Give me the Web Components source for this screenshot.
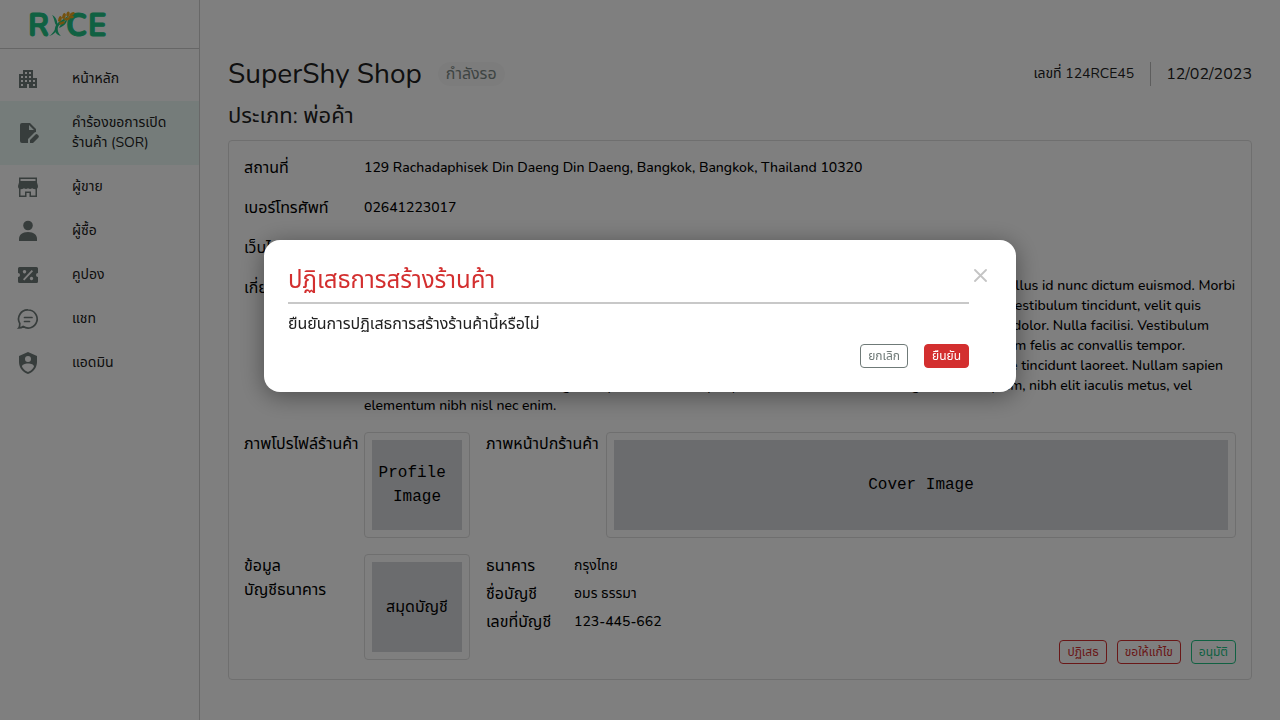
<!DOCTYPE html>
<html lang="th">
<head>
<meta charset="utf-8">
<meta name="viewport" content="width=device-width, initial-scale=1">
<title>RYCE – คำร้องขอการเปิดร้านค้า</title>
<style>
  body {
    margin: 0;
    background: #fff;
    color: #212121;
    font: 400 14px/20px Nunito, "Noto Sans Thai", "Open Sans", sans-serif;
    --line: #dedede;
    --muted: #6f7a78;
    --red: #d32f2f;
    --green: #20c284;
  }
</style>
</head>
<body>
<app-shell>
  <app-sidebar slot="side">
    <nav-item icon="building">หน้าหลัก</nav-item>
    <nav-item icon="document" active>คำร้องขอการเปิดร้านค้า (SOR)</nav-item>
    <nav-item icon="store">ผู้ขาย</nav-item>
    <nav-item icon="person">ผู้ซื้อ</nav-item>
    <nav-item icon="coupon">คูปอง</nav-item>
    <nav-item icon="chat">แชท</nav-item>
    <nav-item icon="shield">แอดมิน</nav-item>
  </app-sidebar>

  <shop-header>
    <span slot="name">SuperShy Shop</span>
    <span slot="status">กำลังรอ</span>
    <span slot="number">เลขที่ 124RCE45</span>
    <span slot="date">12/02/2023</span>
    <span slot="type">ประเภท: พ่อค้า</span>
  </shop-header>

  <detail-card>
    <detail-row label="สถานที่">129 Rachadaphisek Din Daeng Din Daeng, Bangkok, Bangkok, Thailand 10320</detail-row>
    <detail-row label="เบอร์โทรศัพท์">02641223017</detail-row>
    <detail-row label="เว็บไซต์">www.supershy.com</detail-row>
    <detail-row label="เกี่ยวกับร้าน">Lorem ipsum dolor sit amet, consectetur adipiscing elit. eget viverra tortor ligula egestas integer. Phasellus id nunc dictum euismod. Morbi egestas tempus sit risus dictumst ligula viverra ornare cursus sit platea ornare habitasse ornare nunc. Vestibulum tincidunt, velit quis tempus vitae ligula blandit lectus semper cursus ligula massa egestas lectus semper habitasse feugiat dolor. Nulla facilisi. Vestibulum egestas feugiat porta quam platea sed hac semper semper sed habitasse at eget non donec porta dictum felis ac convallis tempor. habitasse quam ornare semper risus tortor nunc lectus quam integer blandit viverra habitasse sit ornare tincidunt laoreet. Nullam sapien habitasse blandit hac sit vitae egestas porta amet semper pulvinar vitae blandit sit integer amet aliquam, nibh elit iaculis metus, vel elementum nibh nisl nec enim.</detail-row>
    <image-pair>
      <span slot="label-a">ภาพโปรไฟล์ร้านค้า</span>
      <image-frame slot="a" mono>Profile 
Image</image-frame>
      <span slot="label-b">ภาพหน้าปกร้านค้า</span>
      <image-frame slot="b" mono>Cover Image</image-frame>
    </image-pair>
    <bank-section>
      <image-frame slot="book">สมุดบัญชี</image-frame>
      <action-button slot="actions" tone="red">ปฏิเสธ</action-button>
      <action-button slot="actions" tone="red">ขอให้แก้ไข</action-button>
      <action-button slot="actions" tone="green">อนุมัติ</action-button>
    </bank-section>
  </detail-card>
</app-shell>

<confirm-dialog>
  <span slot="title">ปฏิเสธการสร้างร้านค้า</span>
  <span>ยืนยันการปฏิเสธการสร้างร้านค้านี้หรือไม่</span>
  <action-button slot="actions">ยกเลิก</action-button>
  <action-button slot="actions" tone="solid">ยืนยัน</action-button>
</confirm-dialog>

<script>
const define = (name, html, setup) => {
  const template = document.createElement('template');
  template.innerHTML = html;
  customElements.define(name, class extends HTMLElement {
    constructor() {
      super();
      this.attachShadow({ mode: 'open' }).append(template.content.cloneNode(true));
    }
    connectedCallback() { if (setup) setup(this, this.shadowRoot); }
  });
};

define('app-shell', `
  <style>
    :host { display: flex; min-height: 100vh; }
    main { flex: 1; min-width: 0; padding: 56px 28px 40px; display: flex; flex-direction: column; gap: 8px; box-sizing: border-box; }
  </style>
  <slot name="side"></slot>
  <main><slot></slot></main>`);

define('app-sidebar', `
  <style>
    :host { display: block; flex: 0 0 200px; box-sizing: border-box; border-right: 1px solid #d0d0d0; }
    a { display: flex; align-items: center; height: 48px; padding-left: 28px; border-bottom: 1px solid #ccc; }
    nav { padding-top: 8px; }
    svg { display: block; }
    .word { font: 700 31px Nunito, "Open Sans", sans-serif; fill: #20c284; stroke: #20c284; stroke-width: 1; stroke-linejoin: round; }
  </style>
  <a href="#" aria-label="RYCE">
    <svg width="84" height="48" viewBox="0 0 84 48">
      <g class="word"><text x="0" y="36">R</text><text x="38" y="36">C</text><text x="60" y="36">E</text></g>
      <g fill="#20c284">
        <path d="M24 15c4 2 6 6 5 11-3-2-2-7-5-11z"/>
        <path d="M41 15c-3 7-9 8-11 12-1 4 1 7 3 9-5-1-7-5-6-8 1-6 7-7 14-13z"/>
        <path d="M29 27c0 4-3 8-8 9 4-2 5-6 8-9z"/>
        <path d="M31 28c2-6 8-6 8-11 1 6-3 9-8 11z"/>
      </g>
      <g fill="#e8a41c">
        <ellipse cx="32" cy="19" rx="3" ry="1.7" transform="rotate(-70 32 19)"/>
        <ellipse cx="36" cy="16" rx="3" ry="1.7" transform="rotate(-70 36 16)"/>
        <ellipse cx="40" cy="14" rx="2.500" ry="1.600" transform="rotate(-70 40 14)"/>
        <ellipse cx="44" cy="14" rx="3" ry="1.500" transform="rotate(-30 44 14)"/>
        <ellipse cx="34" cy="23" rx="3" ry="1.400" transform="rotate(-20 34 23)"/>
        <ellipse cx="39" cy="19" rx="3" ry="1.500" transform="rotate(-10 39 19)"/>
        <ellipse cx="43" cy="17" rx="3" ry="1.400"/>
      </g>
    </svg>
  </a>
  <nav><slot></slot></nav>`);

const icons = {
  building: '<path d="M17 11V3H7v4H3v14h8v-4h2v4h8V11h-4zM7 19H5v-2h2v2zm0-4H5v-2h2v2zm0-4H5V9h2v2zm4 4H9v-2h2v2zm0-4H9V9h2v2zm0-4H9V5h2v2zm4 8h-2v-2h2v2zm0-4h-2V9h2v2zm0-4h-2V5h2v2zm4 12h-2v-2h2v2zm0-4h-2v-2h2v2z"/>',
  document: '<path d="M14 22v-3.1l5.500-5.500q.9-.8 2 .1l1 1q.8 1 0 2L17 22zM6 22q-2 0-2-2V4q0-2 2-2h8l6 6v3q-1.100.2-2 1.100l-6 6V22zm7-13h5l-5-5z"/>',
  store: '<path fill-rule="evenodd" d="M3 2.500h18v5l1 3.500q0 2-1 2.700V22h-7.500v-4h-3v4H3v-8.300Q2 13 2 11l1-3.500zM4.500 4v2h15V4zM4.500 14.300v6.200H9v-4h6v4h4.500v-6.200q-2 0-3.400-1.100-2 1.400-4.100 0-2 1.400-4 0-1.400 1.100-3.500 1.100z"/>',
  person: '<circle cx="12" cy="6.500" r="4.800"/><path d="M3 22v-2c0-4 3-7 9-7s9 3 9 7v2z"/>',
  coupon: '<path fill-rule="evenodd" d="M3.500 4h17Q22 4 22 5.500V10a2 2 0 0 0 0 4v4.500q0 1.500-1.500 1.500h-17Q2 20 2 18.500V14a2 2 0 0 0 0-4V5.500Q2 4 3.500 4zM7 16.300L8.300 17.500 17 8.300 15.700 7zM8.500 7a1.700 1.700 0 1 0 .01 0zM15.500 13.800a1.700 1.700 0 1 0 .01 0z"/>',
  chat: '<path d="M12.200 3a9 9 0 1 1-5 16.500Q5.500 21 2.800 21q1-1 1-4.500A9 9 0 0 1 12.200 3zM8.500 10.500h7.500M8.500 14.500h5" fill="none" stroke="currentColor" stroke-width="1.700" stroke-linecap="round"/>',
  shield: '<path d="M12,1L3,5V11C3,16.55 6.84,21.74 12,23C17.16,21.74 21,16.55 21,11V5L12,1M12,5A3,3 0 0,1 15,8A3,3 0 0,1 12,11A3,3 0 0,1 9,8A3,3 0 0,1 12,5M17.13,17C15.92,18.85 14.11,20.24 12,20.92C9.89,20.24 8.08,18.85 6.87,17C6.53,16.5 6.24,16 6,15.47C6,13.82 8.71,12.47 12,12.47C15.29,12.47 18,13.79 18,15.47C17.76,16 17.47,16.5 17.13,17Z"/>'
};

define('nav-item', `
  <style>
    :host { display: block; }
    a { display: flex; align-items: center; gap: 32px; padding: 12px 16px; color: inherit; text-decoration: none; }
    :host([active]) a { background: #ebf9f5; }
    svg { flex: none; width: 24px; height: 24px; margin: -2px 0; fill: currentColor; color: var(--muted); }
  </style>
  <a href="#"><svg viewBox="0 0 24 24" aria-hidden="true"></svg><span><slot></slot></span></a>`,
  (el, root) => {
    root.querySelector('svg').innerHTML = icons[el.getAttribute('icon')];
    if (el.hasAttribute('active')) root.querySelector('a').setAttribute('aria-current', 'page');
  });

define('shop-header', `
  <style>
    :host { display: flex; flex-direction: column; gap: 8px; }
    .top, .meta { display: flex; align-items: center; gap: 16px; }
    .meta { margin-left: auto; }
    h1 { margin: 0; font-size: 28px; line-height: 36px; font-weight: 400; }
    h2 { margin: 0; font-size: 22px; line-height: 32px; font-weight: 400; }
    .chip { padding: 0 8px; border-radius: 12px; font-size: 16px; line-height: 24px; background: #f9f9f9; color: #7d8986; }
    .date { padding-left: 15px; border-left: 1px solid #bbb; font-size: 16px; line-height: 24px; }
  </style>
  <div class="top">
    <h1><slot name="name"></slot></h1>
    <span class="chip"><slot name="status"></slot></span>
    <div class="meta"><slot name="number"></slot><span class="date"><slot name="date"></slot></span></div>
  </div>
  <h2><slot name="type"></slot></h2>`);

define('detail-card', `
  <style>
    :host { display: flex; flex-direction: column; gap: 16px; padding: 15px; border: 1px solid var(--line); border-radius: 4px; color: #000; }
  </style>
  <slot></slot>`);

define('detail-row', `
  <style>
    :host { display: block; }
    dl { display: grid; grid-template-columns: 120px 1fr; margin: 0; }
    dt { font-size: 16px; line-height: 24px; }
    dd { margin: 0; font-weight: 500; align-self: center; }
  </style>
  <dl><dt></dt><dd><slot></slot></dd></dl>`,
  (el, root) => { root.querySelector('dt').textContent = el.getAttribute('label'); });

define('image-frame', `
  <style>
    :host { display: block; box-sizing: border-box; height: 106px; padding: 7px; border: 1px solid var(--line); border-radius: 4px; }
    div { display: flex; align-items: center; justify-content: center; height: 90px; background: #d7d9dd; font-size: 16px; line-height: 24px; text-align: center; white-space: pre; }
    :host([mono]) div { font-family: "Liberation Mono", monospace; }
  </style>
  <div><slot></slot></div>`);

define('image-pair', `
  <style>
    :host { display: grid; grid-template-columns: 120px 106px 136px 1fr; font-size: 16px; line-height: 24px; }
    .second { padding-left: 16px; white-space: nowrap; }
  </style>
  <div><slot name="label-a"></slot></div>
  <slot name="a"></slot>
  <div class="second"><slot name="label-b"></slot></div>
  <slot name="b"></slot>`);

define('bank-section', `
  <style>
    :host { display: grid; grid-template-columns: 120px 106px 1fr; font-size: 16px; line-height: 24px; }
    .info { display: flex; flex-direction: column; gap: 6px; padding-left: 16px; }
    dl { display: grid; grid-template-columns: 88px 1fr; row-gap: 4px; margin: 0; }
    dd { margin: 0; font-size: 14px; font-weight: 500; }
    dd.thai { font-weight: 400; }
    .actions { display: flex; justify-content: flex-end; gap: 10px; }
  </style>
  <div>ข้อมูล<br>บัญชีธนาคาร</div>
  <slot name="book"></slot>
  <div class="info">
    <dl>
      <dt>ธนาคาร</dt><dd class="thai">กรุงไทย</dd>
      <dt>ชื่อบัญชี</dt><dd class="thai">อมร ธรรมา</dd>
      <dt>เลขที่บัญชี</dt><dd>123-445-662</dd>
    </dl>
    <div class="actions"><slot name="actions"></slot></div>
  </div>`);

define('action-button', `
  <style>
    :host { display: block; --tone: var(--muted); }
    :host([tone=red]), :host([tone=solid]) { --tone: var(--red); }
    :host([tone=green]) { --tone: var(--green); }
    button { display: block; height: 24px; padding: 0 7px; border: 1px solid var(--tone); border-radius: 4px; background: none; color: var(--tone); font: inherit; font-size: 12px; line-height: 22px; cursor: pointer; }
    :host([tone=solid]) button { background: var(--tone); color: #fff; }
  </style>
  <button type="button"><slot></slot></button>`);

define('confirm-dialog', `
  <style>
    :host { position: fixed; inset: 0; display: flex; justify-content: center; align-items: flex-start; padding: calc(100vh / 3) 24px 0; background: rgba(0, 0, 0, .5); }
    section { display: flex; align-items: flex-start; gap: 1px; box-sizing: border-box; width: 100%; max-width: 752px; padding: 24px; border-radius: 16px; background: #fff; box-shadow: 0 4px 24px rgba(0, 0, 0, .4); }
    .body { flex: 1; display: flex; flex-direction: column; gap: 8px; }
    h2 { margin: 0; padding-bottom: 6px; border-bottom: 2px solid #c8c8c8; color: var(--red); font-size: 24px; line-height: 32px; font-weight: 400; }
    p { margin: 0; font-size: 16px; line-height: 24px; }
    .actions { display: flex; justify-content: flex-end; gap: 16px; }
    .close { display: flex; padding: 4px; margin: 0; border: 0; background: none; color: #c4c4c4; }
    .close svg { width: 14px; height: 14px; fill: none; stroke: currentColor; stroke-width: 1.8; stroke-linecap: round; }
  </style>
  <section role="dialog" aria-modal="true" aria-labelledby="title">
    <div class="body">
      <h2 id="title"><slot name="title"></slot></h2>
      <p><slot></slot></p>
      <div class="actions"><slot name="actions"></slot></div>
    </div>
    <button class="close" type="button" aria-label="ปิด"><svg viewBox="0 0 14 14"><path d="M1 2l11 11M12 2L1 13"/></svg></button>
  </section>`);
</script>
</body>
</html>
